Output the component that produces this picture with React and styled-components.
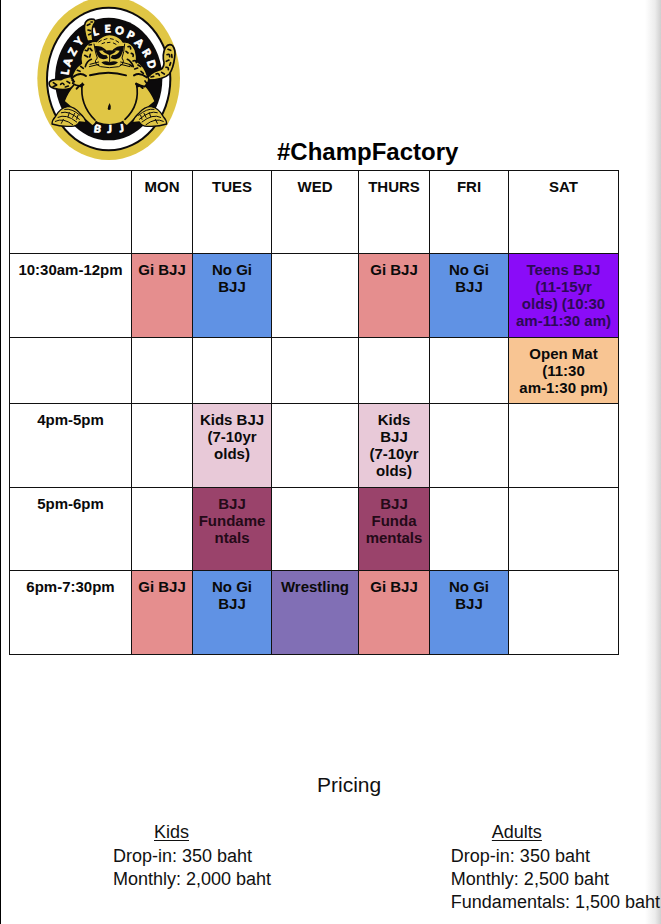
import React from "react";
import styled, { createGlobalStyle } from "styled-components";

const GlobalStyle = createGlobalStyle`
  * { box-sizing: border-box; }
  body { margin: 0; background: #fff; }
`;

const gold = "#e0c645";
const ink = "#0c0a0b";

const Page = styled.main`
  min-height: 100vh;
  border-left: 1px solid #000;
  background: linear-gradient(to left, #cfcfcf, #ececec 6px, #fff 16px);
  color: #111;
  font-family: "Liberation Sans", Arial, sans-serif;
`;

const Header = styled.header`
  display: flex;
  align-items: flex-end;
  gap: 96px;
  height: 170px;
  padding-left: 35px;
`;

const LogoArt = styled.svg`
  flex: none;
  align-self: flex-start;
  width: 145px;
  height: 160px;
`;

const LogoText = styled.text`
  font-family: Lato, "Liberation Sans", sans-serif;
  font-weight: 900;
  font-size: 32px;
  fill: #fff;
  stroke: #fff;
  stroke-width: 2px;
`;

const Title = styled.h1`
  margin: 0 0 4px;
  font-size: 24px;
  line-height: 28px;
  color: #000;
`;

const TableArea = styled.section`
  padding: 0 42px 0 8px;
`;

const Schedule = styled.table`
  width: 100%;
  table-layout: fixed;
  border-collapse: collapse;
  font-size: 15px;
  font-weight: 700;
  line-height: 17px;
  text-align: center;
  color: #0a0a0a;
`;

const Column = styled.col`
  width: ${(p) => p.$width}px;
`;

const Row = styled.tr`
  height: ${(p) => p.$height}px;
`;

const cellStyle = `
  padding: 7px 0 0;
  border: 1px solid #111;
  vertical-align: top;
  white-space: pre;
`;

const HeadCell = styled.th`
  ${cellStyle}
`;

const tones = {
  gi: "#e58e8e",
  nogi: "#6092e4",
  teens: "#8a0cf8",
  open: "#f8c593",
  kids: "#e8c9d8",
  fundamentals: "#9a436b",
  wrestling: "#816fb5",
};

const textTones = { teens: "#2c0a55", fundamentals: "#240a18" };

const Cell = styled.td`
  ${cellStyle}
  background: ${(p) => tones[p.$tone] || "transparent"};
  color: ${(p) => textTones[p.$tone] || "inherit"};
`;

const Pricing = styled.section`
  padding: 116px 1px 10px 112px;
`;

const PricingTitle = styled.h2`
  margin: 0 0 22px 204px;
  font-size: 21px;
  font-weight: 400;
  line-height: 28px;
`;

const Plans = styled.div`
  display: flex;
  justify-content: space-between;
`;

const Plan = styled.section`
  font-size: 18px;
  line-height: 23px;
  white-space: nowrap;
`;

const PlanTitle = styled.h3`
  margin: 0 0 1px 41px;
  font-size: 18px;
  font-weight: 400;
  text-decoration: underline;
  text-decoration-thickness: 1px;
  text-underline-offset: 2px;
`;

const Prices = styled.ul`
  margin: 0;
  padding: 0;
  list-style: none;
`;

/* Each letter is [centre x, centre y, angle, advance]. */
const badgeWords = [
  {
    word: "LAZY",
    letters: [
      [106, 216, -82, 17],
      [113, 187, -71, 22],
      [128, 155, -60, 20],
      [147, 125, -49, 20],
    ],
  },
  {
    word: "LEOPARD",
    letters: [
      [197, 95, -15, 17],
      [233, 87, -2, 18],
      [269, 92, 13, 26],
      [302, 106, 27, 20],
      [328, 129, 42, 23],
      [350, 158, 58, 21],
      [364, 193, 73, 24],
    ],
  },
  {
    word: "BJJ",
    letters: [
      [202, 386, 7, 20],
      [239, 389, 0, 14],
      [275, 385, -8, 14],
    ],
  },
];

function BadgeWord({ word, letters }) {
  const rise = 11;
  const spots = letters.map(([cx, cy, angle, advance]) => {
    const a = (angle * Math.PI) / 180;
    return {
      x: cx - (advance / 2) * Math.cos(a) - rise * Math.sin(a),
      y: cy - (advance / 2) * Math.sin(a) + rise * Math.cos(a),
    };
  });
  return (
    <LogoText
      x={spots.map((s) => s.x).join(" ")}
      y={spots.map((s) => s.y).join(" ")}
      rotate={letters.map((l) => l[2]).join(" ")}
    >
      {word}
    </LogoText>
  );
}

function Foot() {
  return (
    <g stroke={ink} strokeLinejoin="round" strokeLinecap="round">
      <path
        d="M66 372 Q66 360 76 350 Q90 324 112 320 Q130 318 148 338 Q164 352 170 368 L148 366 Q140 380 122 379 Q92 381 66 372Z"
        fill={gold}
        strokeWidth="4"
      />
      <path
        d="M76 364 Q100 352 128 374 M84 352 Q108 340 140 366 M94 338 Q116 330 148 358 M104 328 Q126 324 150 346 M94 370 L100 358 M114 350 L118 338 M128 352 L134 340 M140 358 L144 346"
        fill="none"
        strokeWidth="3"
      />
    </g>
  );
}

function Logo() {
  return (
    <LogoArt viewBox="18 0 435 480" role="img" aria-label="Lazy Leopard BJJ">
      <ellipse cx="236" cy="235" rx="214" ry="245" fill={gold} />
      <ellipse cx="236" cy="237" rx="188" ry="217" fill={ink} />
      <ellipse cx="236" cy="237" rx="182" ry="211" fill="#fff" />
      <ellipse cx="236" cy="237" rx="161" ry="184" fill={ink} />
      {badgeWords.map((w) => (
        <BadgeWord key={w.word} {...w} />
      ))}

      <g stroke={ink} strokeWidth="5" strokeLinejoin="round" fill={gold}>
        {/* raised tail and arms */}
        <path d="M172 124 Q158 86 166 68 Q174 54 192 58 Q200 64 191 74 Q183 88 189 122Z" />
        <path d="M350 238 Q362 216 384 211 Q402 208 402 188 Q396 164 406 143 Q416 129 428 137 Q438 150 434 172 Q430 205 418 222 Q400 240 352 240Z" />
        <path d="M136 228 Q108 230 92 239 Q66 236 58 247 Q54 260 72 265 Q98 272 120 266 L146 250Z" />
        {/* trousers */}
        <path d="M134 252 Q112 276 102 304 L158 352 L187 378 Q202 372 200 354 L158 262Z" />
        <path d="M342 252 Q364 276 376 304 L318 352 L291 378 Q276 372 276 354 L318 262Z" />
        {/* shoulders */}
        <path d="M124 234 Q132 204 154 190 Q148 164 164 142 Q178 122 200 124 Q222 98 250 105 Q270 110 280 126 Q304 122 316 150 Q322 170 320 184 Q344 196 354 232 Q362 242 344 260 L308 250 L166 252 Q148 264 128 250 Q134 240 124 234Z" />
      </g>

      <path
        d="M170 225 Q236 205 308 225 Q328 260 322 310 Q312 350 270 367 Q236 377 204 366 Q168 346 157 310 Q148 260 170 225Z"
        fill={gold}
      />
      <g fill="none" stroke={ink} strokeLinecap="round">
        <path d="M157 250 Q148 314 195 360 M319 250 Q332 314 285 358" strokeWidth="5" />
        <path d="M180 226 Q236 210 288 226" strokeWidth="6" />
        <path d="M128 232 Q150 214 168 228 M350 232 Q330 216 312 226 M140 266 Q154 250 160 254 M338 264 Q324 250 318 252" strokeWidth="6" />
        <path d="M166 200 Q170 184 184 178 M310 200 Q304 184 292 178" strokeWidth="5" />
      </g>
      <path d="M239 309 Q245 320 242 328 Q236 333 233 327 Q233 319 239 309Z" fill={ink} />

      {/* face */}
      <g fill={ink}>
        <path d="M194 138 Q214 136 226 148 L230 154 Q216 150 207 152 Q212 164 230 166 L234 174 Q212 184 202 166 Q196 154 194 138Z" />
        <path d="M282 138 Q262 136 250 148 L246 154 Q260 150 269 152 Q264 164 246 166 L242 174 Q264 184 274 166 Q280 154 282 138Z" />
        <path d="M218 154 Q238 148 258 154 Q254 160 239 166 Q224 160 218 154Z" />
        <path d="M214 187 Q228 181 239 187 Q252 181 264 187 Q256 197 239 196 Q222 197 214 187Z" />
      </g>
      <g fill="none" stroke={ink} strokeWidth="3" strokeLinecap="round">
        <path d="M239 166 V186 M192 132 Q196 160 202 174 Q186 190 212 200 Q238 206 266 200 Q288 190 276 174 Q282 158 284 132 M180 193 L206 186 M178 200 L206 193 M298 193 L272 186 M300 200 L272 193" />
        <path d="M206 126 l8-5 M222 119 l9-3 M241 116 l9 2 M258 122 l8 5 M216 131 l8-3 M232 128 l8-1 M250 129 l8 4" />
      </g>

      {/* coat markings */}
      <g fill="none" stroke={ink} strokeWidth="5" strokeLinecap="round" strokeLinejoin="round">
        <path d="M172 76 l8-4 M174 90 l7 2 M176 104 l7-3 M183 66 l4 0" />
        <path d="M166 151 q8 4 9-6 M180 145 l6 7 M164 166 l9 5 M181 163 l-2 8 M152 199 l8 6 M142 211 l8 3 M177 135 l7-1" />
        <path d="M294 140 q8-4 8 7 M288 154 l6 5 M304 160 q8 2 5 9 M309 183 q9-4 10 5 M299 194 l7 5 M324 195 l8 5 M314 207 l9-3 M333 214 l7 6" />
        <path d="M414 148 l8 3 M411 164 q8-4 8 6 M425 164 l1 8 M409 184 l8-4 M422 188 l-3 8 M408 202 q8-2 7 7 M395 217 l8 5 M378 222 q8-4 10 4 M363 231 l8-2" />
        <path d="M70 248 l10 7 M69 260 l10-4 M92 253 q6-7 10 1 M111 244 l8 5 M106 261 l9-3 M126 240 l7 5 M345 243 l5 7" />
      </g>

      <Foot />
      <g transform="translate(476 0) scale(-1 1)">
        <Foot />
      </g>
    </LogoArt>
  );
}

const columns = [122, 61, 79, 87, 71, 79, 110];
const days = ["", "MON", "TUES", "WED", "THURS", "FRI", "SAT"];

const gi = { text: "Gi BJJ", tone: "gi" };
const nogi = { text: "No Gi\nBJJ", tone: "nogi" };

const rows = [
  {
    time: "10:30am-12pm",
    height: 84,
    classes: [gi, nogi, null, gi, nogi, { text: "Teens BJJ\n(11-15yr\nolds) (10:30\nam-11:30 am)", tone: "teens" }],
  },
  {
    time: "",
    height: 66,
    classes: [null, null, null, null, null, { text: "Open Mat\n(11:30\nam-1:30 pm)", tone: "open" }],
  },
  {
    time: "4pm-5pm",
    height: 84,
    classes: [
      null,
      { text: "Kids BJJ\n(7-10yr\nolds)", tone: "kids" },
      null,
      { text: "Kids\nBJJ\n(7-10yr\nolds)", tone: "kids" },
      null,
      null,
    ],
  },
  {
    time: "5pm-6pm",
    height: 83,
    classes: [
      null,
      { text: "BJJ\nFundame\nntals", tone: "fundamentals" },
      null,
      { text: "BJJ\nFunda\nmentals", tone: "fundamentals" },
      null,
      null,
    ],
  },
  {
    time: "6pm-7:30pm",
    height: 84,
    classes: [gi, nogi, { text: "Wrestling", tone: "wrestling" }, gi, nogi, null],
  },
];

const plans = [
  { name: "Kids", prices: ["Drop-in: 350 baht", "Monthly: 2,000 baht"] },
  { name: "Adults", prices: ["Drop-in: 350 baht", "Monthly: 2,500 baht", "Fundamentals: 1,500 baht"] },
];

export default function App() {
  return (
    <Page>
      <GlobalStyle />
      <Header>
        <Logo />
        <Title>#ChampFactory</Title>
      </Header>
      <TableArea>
        <Schedule>
          <colgroup>
            {columns.map((width, i) => (
              <Column key={i} $width={width} />
            ))}
          </colgroup>
          <thead>
            <Row $height={83}>
              {days.map((day) => (
                <HeadCell key={day} scope="col">{day}</HeadCell>
              ))}
            </Row>
          </thead>
          <tbody>
            {rows.map((row, i) => (
              <Row key={i} $height={row.height}>
                <HeadCell scope="row">{row.time}</HeadCell>
                {row.classes.map((item, j) => (
                  <Cell key={j} $tone={item?.tone}>{item?.text}</Cell>
                ))}
              </Row>
            ))}
          </tbody>
        </Schedule>
      </TableArea>
      <Pricing>
        <PricingTitle>Pricing</PricingTitle>
        <Plans>
          {plans.map((plan) => (
            <Plan key={plan.name}>
              <PlanTitle>{plan.name}</PlanTitle>
              <Prices>
                {plan.prices.map((price) => (
                  <li key={price}>{price}</li>
                ))}
              </Prices>
            </Plan>
          ))}
        </Plans>
      </Pricing>
    </Page>
  );
}
